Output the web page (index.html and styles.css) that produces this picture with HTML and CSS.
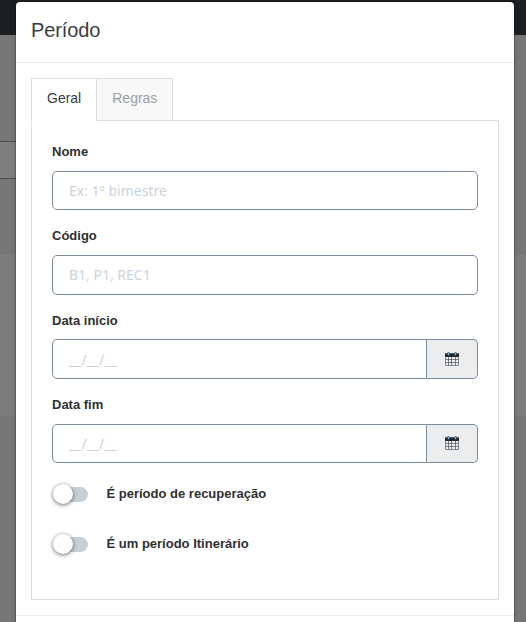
FILE: index.html
```html
<!DOCTYPE html>
<html lang="pt-BR">
<head>
<meta charset="utf-8">
<title>Período</title>
<link rel="stylesheet" href="styles.css">
</head>
<body>
<svg class="sprite" width="0" height="0" aria-hidden="true">
  <symbol id="calendar" viewBox="0 0 14 14">
    <path fill="#20262c" d="M1 1.3h12a1 1 0 0 1 1 1v2.7h-14v-2.7a1 1 0 0 1 1-1z"/>
    <path fill="none" stroke="#4b5258" stroke-width=".7" d="M.4 4v9.2a.4.4 0 0 0 .4.4h12.4a.4.4 0 0 0 .4-.4v-9.2M3.5 5v8.5M6.5 5v8.5M10.5 5v8.5M.5 7.5h13M.5 10.5h13"/>
    <rect x="2.4" y="0" width="2.2" height="3.6" rx="1" fill="#4c6375"/>
    <rect x="9.4" y="0" width="2.2" height="3.6" rx="1" fill="#4c6375"/>
    <path fill="#86b4d6" d="M3 .7h1v2.2h-1zM10 .7h1v2.2h-1z"/>
  </symbol>
</svg>
<div class="page">
  <div class="topbar"></div>
  <div class="filters"><div class="filter-box"></div></div>
  <div class="rows"></div>
</div>
<section class="modal" role="dialog">
  <header class="modal-header"><h4>Período</h4></header>
  <div class="modal-body">
    <nav class="tabs">
      <a class="tab active">Geral</a>
      <a class="tab">Regras</a>
    </nav>
    <form class="panel">
      <div class="field">
        <label for="nome">Nome</label>
        <input id="nome" class="control" placeholder="Ex: 1º bimestre">
      </div>
      <div class="field">
        <label for="codigo">Código</label>
        <input id="codigo" class="control" placeholder="B1, P1, REC1">
      </div>
      <div class="field">
        <label for="inicio">Data início</label>
        <div class="group">
          <input id="inicio" class="control" placeholder="__/__/__">
          <span class="addon"><svg width="14" height="14"><use href="#calendar"/></svg></span>
        </div>
      </div>
      <div class="field">
        <label for="fim">Data fim</label>
        <div class="group">
          <input id="fim" class="control" placeholder="__/__/__">
          <span class="addon"><svg width="14" height="14"><use href="#calendar"/></svg></span>
        </div>
      </div>
      <div class="switch-row"><span class="switch"><i></i></span><span>É período de recuperação</span></div>
      <div class="switch-row"><span class="switch"><i></i></span><span>É um período Itinerário</span></div>
    </form>
  </div>
  <footer class="modal-footer"></footer>
</section>
</body>
</html>
```
FILE: styles.css
```css
* { box-sizing: border-box; }
body {
  margin: 0;
  height: 622px;
  overflow: hidden;
  position: relative;
  background: #777;
  color: #2f3032;
  font-family: "Liberation Sans", Arial, sans-serif;
}
.sprite { display: block; }
.topbar { height: 35px; background: #1b1f22; }
.filters { height: 220px; padding-top: 106px; }
.filter-box {
  width: 30px;
  height: 38px;
  border: solid #47505a;
  border-width: 1px 0;
  background: #7e7e7e;
}
.rows { height: 161px; background: #7d7d7d; }
.modal {
  position: absolute;
  top: 2px;
  left: 16px;
  width: 498px;
  height: 640px;
  background: #fff;
  border-radius: 4px 4px 0 0;
  box-shadow: 0 0 0 1px rgba(0, 0, 0, .2), 0 2px 6px rgba(0, 0, 0, .15);
}
.modal-header {
  height: 61px;
  padding: 16px 15px;
  border-bottom: 1px solid #ececec;
}
.modal-header h4 {
  margin: 0;
  font-size: 20px;
  line-height: 24px;
  letter-spacing: -.1px;
  font-weight: 400;
  color: #3b3c3e;
}
.modal-body { padding: 15px; }
.tabs { display: flex; height: 42px; }
.tab {
  height: 43px;
  padding: 0 15px;
  border: 1px solid #ddd;
  background: #f8f8f8;
  color: #9c9ea3;
  font-size: 14px;
  line-height: 39px;
}
.tab + .tab { margin-left: -1px; }
.tab.active {
  position: relative;
  background: #fff;
  border-bottom-color: #fff;
  color: #3b3c3e;
}
.panel {
  height: 480px;
  padding: 20px;
  border: 1px solid #ddd;
}
.field { height: 84.25px; }
.field label {
  display: block;
  height: 29.8px;
  font-size: 13px;
  line-height: 22px;
  font-weight: 700;
}
.control {
  display: block;
  width: 100%;
  height: 39.55px;
  padding: 0 16px;
  border: 1px solid #7c8b99;
  border-radius: 5px;
  background: #fff;
  font-family: "Noto Sans", "Open Sans", sans-serif;
  font-size: 14px;
}
.control::placeholder { color: #cad3db; opacity: 1; }
.group { display: flex; height: 39.55px; }
.group .control { flex: 1; min-width: 0; border-radius: 5px 0 0 5px; }
.addon {
  display: flex;
  align-items: center;
  justify-content: center;
  width: 51px;
  border: 1px solid #7c8b99;
  border-left: 0;
  border-radius: 0 5px 5px 0;
  background: #ebedef;
}
.switch-row {
  display: flex;
  align-items: center;
  gap: 18.5px;
  height: 31px;
  margin-bottom: 19px;
  font-size: 13px;
  font-weight: 700;
}
.switch {
  display: flex;
  align-items: center;
  width: 36px;
  height: 15px;
  margin-top: 1px;
  border-radius: 8px;
  background: linear-gradient(#c7d0d8, #c7d0d8) right / 30px 100% no-repeat;
}
.switch i {
  flex: none;
  width: 20px;
  height: 20px;
  margin-left: 1px;
  border-radius: 50%;
  background: #fff;
  box-shadow: 0 1px 4px rgba(0, 0, 0, .6);
}
.modal-footer { border-top: 1px solid #ececec; }
```
